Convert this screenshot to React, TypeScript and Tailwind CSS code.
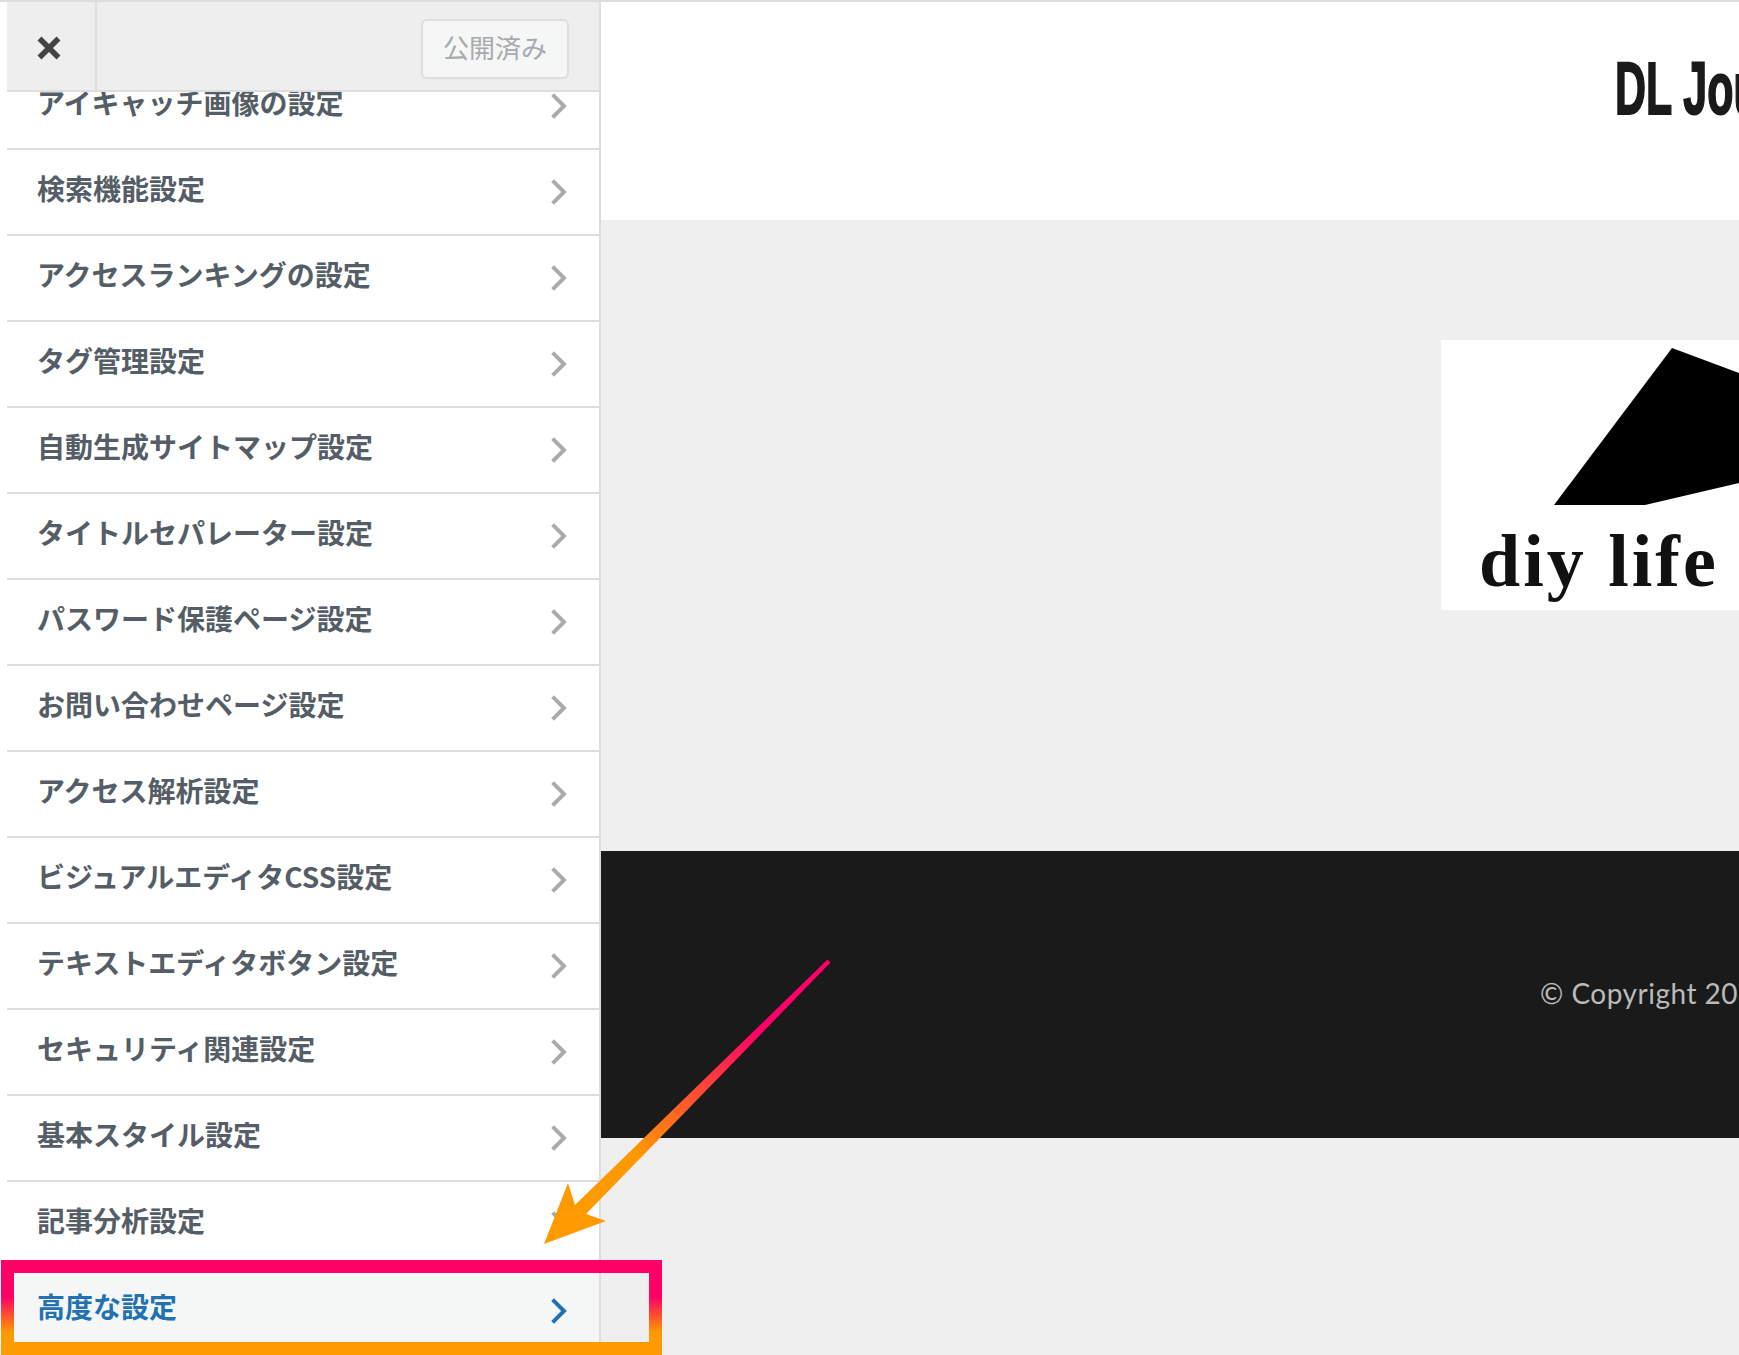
const menuItems = [
  'アイキャッチ画像の設定',
  '検索機能設定',
  'アクセスランキングの設定',
  'タグ管理設定',
  '自動生成サイトマップ設定',
  'タイトルセパレーター設定',
  'パスワード保護ページ設定',
  'お問い合わせページ設定',
  'アクセス解析設定',
  'ビジュアルエディタCSS設定',
  'テキストエディタボタン設定',
  'セキュリティ関連設定',
  '基本スタイル設定',
  '記事分析設定',
]

function Chevron({ className }: { className: string }) {
  return (
    <svg width="16" height="26" viewBox="0 0 16 26" fill="none" className={className}>
      <path d="M1.6 1.6 L13 13 L1.6 24.4" stroke="currentColor" strokeWidth="4" />
    </svg>
  )
}

export default function App() {
  return (
    <div className="relative flex h-[1355px] w-[1739px] flex-col overflow-hidden border-t-2 border-[#dddddd] bg-white font-['Noto_Sans_CJK_JP',sans-serif]">
      <div className="flex h-[1353px] w-full">

        {/* Sidebar */}
        <aside className="flex h-full w-[601px] shrink-0 flex-col overflow-hidden border-r-2 border-[#dddddd] bg-white pl-[7px]">
          <div className="relative z-10 flex h-[90px] shrink-0 items-center border-b-2 border-[#dddddd] bg-[#eeeeee]">
            <div className="flex h-full w-[90px] shrink-0 items-center justify-center border-r-2 border-[#dddddd]">
              <svg width="24" height="24" viewBox="0 0 24 24" className="mr-[5px] mt-[4px] text-[#444444]">
                <path d="M2.5 2.5 L21.5 21.5 M21.5 2.5 L2.5 21.5" stroke="currentColor" strokeWidth="5.6" />
              </svg>
            </div>
            <div className="mt-[6px] flex flex-1 justify-end pr-[30px]">
              <div className="flex h-[60px] w-[148px] items-center justify-center rounded-md border-2 border-[#dddddd] bg-[#f5f7f7] text-[26px] text-[#a7aaad]">
                <span className="-mt-[5px]">公開済み</span>
              </div>
            </div>
          </div>

          <ul className="-mt-[28px] flex flex-col">
            {menuItems.map((label) => (
              <li
                key={label}
                className="flex h-[86px] shrink-0 items-center justify-between border-b-2 border-[#dddddd] pl-[30px] pr-[32px] text-[28px] font-bold text-[#555d66]"
              >
                <span className="-mt-[8px] whitespace-nowrap leading-none">{label}</span>
                <Chevron className="text-[#a9abae]" />
              </li>
            ))}
            <li className="flex h-[86px] shrink-0 items-center justify-between bg-[#f5f7f7] pl-[30px] pr-[32px] text-[28px] font-bold text-[#2271b1]">
              <span className="-mt-[10px] whitespace-nowrap leading-none">高度な設定</span>
              <Chevron className="text-[#2271b1]" />
            </li>
          </ul>
        </aside>

        {/* Preview */}
        <main className="flex h-full flex-1 flex-col overflow-hidden bg-[#efefef]">
          <header className="flex h-[218px] shrink-0 overflow-hidden bg-white pl-[1014px] pt-[50px]">
            <span className="origin-left scale-x-[0.58] whitespace-nowrap font-['Liberation_Sans',sans-serif] text-[74px] font-bold leading-none text-[#1a1a1a] [-webkit-text-stroke:2px_#1a1a1a]">
              DL Jou
            </span>
          </header>

          <section className="h-[631px] shrink-0 pl-[840px] pt-[120px]">
            <div className="relative h-[270px] w-[298px] overflow-hidden bg-white">
              <svg width="298" height="270" viewBox="0 0 298 270" className="absolute left-0 top-0">
                <polygon points="231,8 298,33 298,143 204,165 113,165" fill="#000000" />
              </svg>
              <div className="whitespace-nowrap pl-[38px] pt-[184px] font-['Liberation_Serif',serif] text-[74px] font-bold leading-none tracking-[3px] text-[#111111] blur-[0.6px]">
                diy life
              </div>
            </div>
          </section>

          <footer className="h-[287px] shrink-0 overflow-hidden bg-[#1a1a1a] pl-[939px] pt-[128px]">
            <span className="whitespace-nowrap font-['Lato',sans-serif] text-[28px] leading-none tracking-[0.5px] text-[#bbbbbb]">
              © Copyright 20
            </span>
          </footer>
        </main>
      </div>

      {/* Annotation: highlight box */}
      <div className="absolute left-[1px] top-[1258px] h-[95px] w-[661px] border-[13px] border-solid [border-image:linear-gradient(180deg,#ff0066_35%,#ff9900_85%)_1]" />

      {/* Annotation: arrow */}
      <svg width="1739" height="1355" viewBox="0 0 1739 1355" className="pointer-events-none absolute left-0 top-[-2px]">
        <defs>
          <linearGradient id="arrowFill" gradientUnits="userSpaceOnUse" x1="829" y1="961" x2="544" y2="1244">
            <stop offset="0.25" stopColor="#ff0066" />
            <stop offset="0.68" stopColor="#ff9900" />
          </linearGradient>
        </defs>
        <polygon
          points="827.5,959.5 830.5,962.5 586,1214 606,1221 544,1244 568,1183 575,1205"
          fill="url(#arrowFill)"
        />
      </svg>
    </div>
  )
}
